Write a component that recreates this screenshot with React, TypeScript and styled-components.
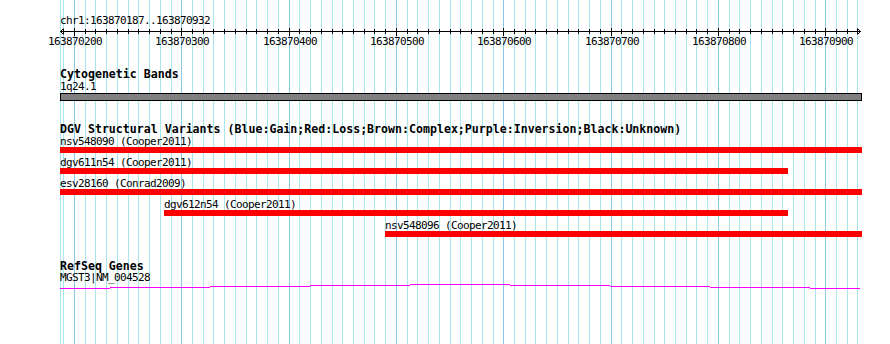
import React from "react";
import styled, { createGlobalStyle } from "styled-components";

const VIEW_START = 163870187;
const LEFT = 60;
const RIGHT = 862;
const SCALE = 1.0733; // px per bp

const toX = (bp: number) => LEFT + (bp - VIEW_START) * SCALE;
const clampX = (x: number) => Math.min(Math.max(x, LEFT), RIGHT);

interface Feature {
  name: string;
  study: string;
  start: number;
  end: number;
}

const variants: Feature[] = [
  { name: "nsv548090", study: "Cooper2011", start: 163869900, end: 163871400 },
  { name: "dgv611n54", study: "Cooper2011", start: 163869900, end: 163870865 },
  { name: "esv28160", study: "Conrad2009", start: 163869500, end: 163871800 },
  { name: "dgv612n54", study: "Cooper2011", start: 163870284, end: 163870865 },
  { name: "nsv548096", study: "Cooper2011", start: 163870490, end: 163871400 },
];

// intron connector drawn as a shallow hat, in 100px steps
const geneSteps: [number, number, number][] = [
  [60, 110, 5],
  [110, 210, 4],
  [210, 310, 3],
  [310, 410, 2],
  [410, 510, 1],
  [510, 610, 2],
  [610, 710, 3],
  [710, 810, 4],
  [810, 860, 5],
];

const MONO = '"DejaVu Sans Mono", "Liberation Mono", monospace';

const GlobalStyle = createGlobalStyle`
  html, body {
    margin: 0;
    padding: 0;
    background: #fff;
  }
`;

const Canvas = styled.div`
  position: relative;
  width: 890px;
  height: 344px;
  overflow: hidden;
  background: #fff;
  color: #000;
  font-family: ${MONO};
`;

const GridLayer = styled.svg`
  position: absolute;
  top: 0;
  left: 0;
  pointer-events: none;
`;

const Content = styled.div`
  position: relative;
  padding-top: 16px;
`;

const SmallText = styled.div<{ $gap?: number }>`
  font-size: 11px;
  line-height: 10px;
  letter-spacing: -0.62px;
  white-space: nowrap;
  margin-top: ${(p) => p.$gap ?? 0}px;
`;

const RulerName = styled(SmallText)`
  padding-left: 60px;
`;

const RulerSvg = styled.svg`
  display: block;
  margin-top: 1px;
`;

const Track = styled.section<{ $gap: number }>`
  padding-left: 60px;
  margin-top: ${(p) => p.$gap}px;
`;

const TrackTitle = styled.div`
  font-size: 11.6px;
  font-weight: bold;
  line-height: 10px;
  white-space: nowrap;
`;

const BandBar = styled.div`
  box-sizing: border-box;
  width: 802px;
  height: 8px;
  margin-top: 1px;
  border: 1px solid #000;
  background: #808080;
`;

const FeatureList = styled.div`
  display: grid;
  row-gap: 5px;
  margin-top: 3px;
`;

const FeatureRow = styled.div`
  display: flex;
  flex-direction: column;
  align-items: flex-start;
`;

const FeatureBar = styled.div<{ $color: string }>`
  height: 6px;
  background: ${(p) => p.$color};
`;

const GeneSvg = styled.svg`
  display: block;
  margin-left: -60px;
`;

function Grid() {
  const lines = [<line key="edge" x1={60.5} x2={60.5} y1={0} y2={344} stroke="#a8e6ee" />];
  for (let bp = 163870190; bp <= 163870930; bp += 10) {
    const x = Math.round(toX(bp)) + 0.5;
    const major = bp % 100 === 0;
    lines.push(
      <line key={bp} x1={x} x2={x} y1={0} y2={344} stroke={major ? "#88c8e8" : "#a8e6ee"} />
    );
  }
  return (
    <GridLayer width={890} height={344}>
      {lines}
    </GridLayer>
  );
}

function Ruler() {
  const ticks: React.ReactNode[] = [];
  for (let bp = 163870190; bp <= 163870930; bp += 10) {
    const x = Math.round(toX(bp)) + 0.5;
    const major = bp % 100 === 0;
    ticks.push(
      <line key={bp} x1={x} x2={x} y1={major ? 1 : 2} y2={major ? 9 : 7} stroke="#000" />
    );
    if (major) {
      ticks.push(
        <text
          key={"l" + bp}
          x={x + 0.5}
          y={17.5}
          textAnchor="middle"
          fontSize={11}
          letterSpacing={-0.62}
          fontFamily={MONO}
          fill="#000"
        >
          {bp}
        </text>
      );
    }
  }
  return (
    <RulerSvg width={890} height={20}>
      <line x1={60} x2={861} y1={4.5} y2={4.5} stroke="#000" />
      <polyline points="63.5,1.5 60.5,4.5 63.5,7.5" fill="none" stroke="#000" />
      <polyline points="857.5,1.5 860.5,4.5 857.5,7.5" fill="none" stroke="#000" />
      {ticks}
    </RulerSvg>
  );
}

export default function App() {
  return (
    <>
      <GlobalStyle />
      <Canvas>
        <Grid />
        <Content>
          <RulerName>chr1:163870187..163870932</RulerName>
          <Ruler />

          <Track $gap={22}>
            <TrackTitle>Cytogenetic Bands</TrackTitle>
            <SmallText $gap={3}>1q24.1</SmallText>
            <BandBar />
          </Track>

          <Track $gap={23}>
            <TrackTitle>
              DGV Structural Variants (Blue:Gain;Red:Loss;Brown:Complex;Purple:Inversion;Black:Unknown)
            </TrackTitle>
            <FeatureList>
              {variants.map((v) => {
                const x0 = Math.round(clampX(toX(v.start)));
                const x1 = Math.round(clampX(toX(v.end)));
                return (
                  <FeatureRow key={v.name} style={{ paddingLeft: x0 - LEFT }}>
                    <SmallText>
                      {v.name} ({v.study})
                    </SmallText>
                    <FeatureBar $color="#ff0000" style={{ width: x1 - x0 }} />
                  </FeatureRow>
                );
              })}
            </FeatureList>
          </Track>

          <Track $gap={24}>
            <TrackTitle>RefSeq Genes</TrackTitle>
            <SmallText $gap={2}>MGST3|NM_004528</SmallText>
            <GeneSvg width={890} height={7}>
              {geneSteps.map(([a, b, y]) => (
                <rect key={a} x={a} y={y} width={b - a} height={1} fill="#ff00ff" />
              ))}
            </GeneSvg>
          </Track>
        </Content>
      </Canvas>
    </>
  );
}
